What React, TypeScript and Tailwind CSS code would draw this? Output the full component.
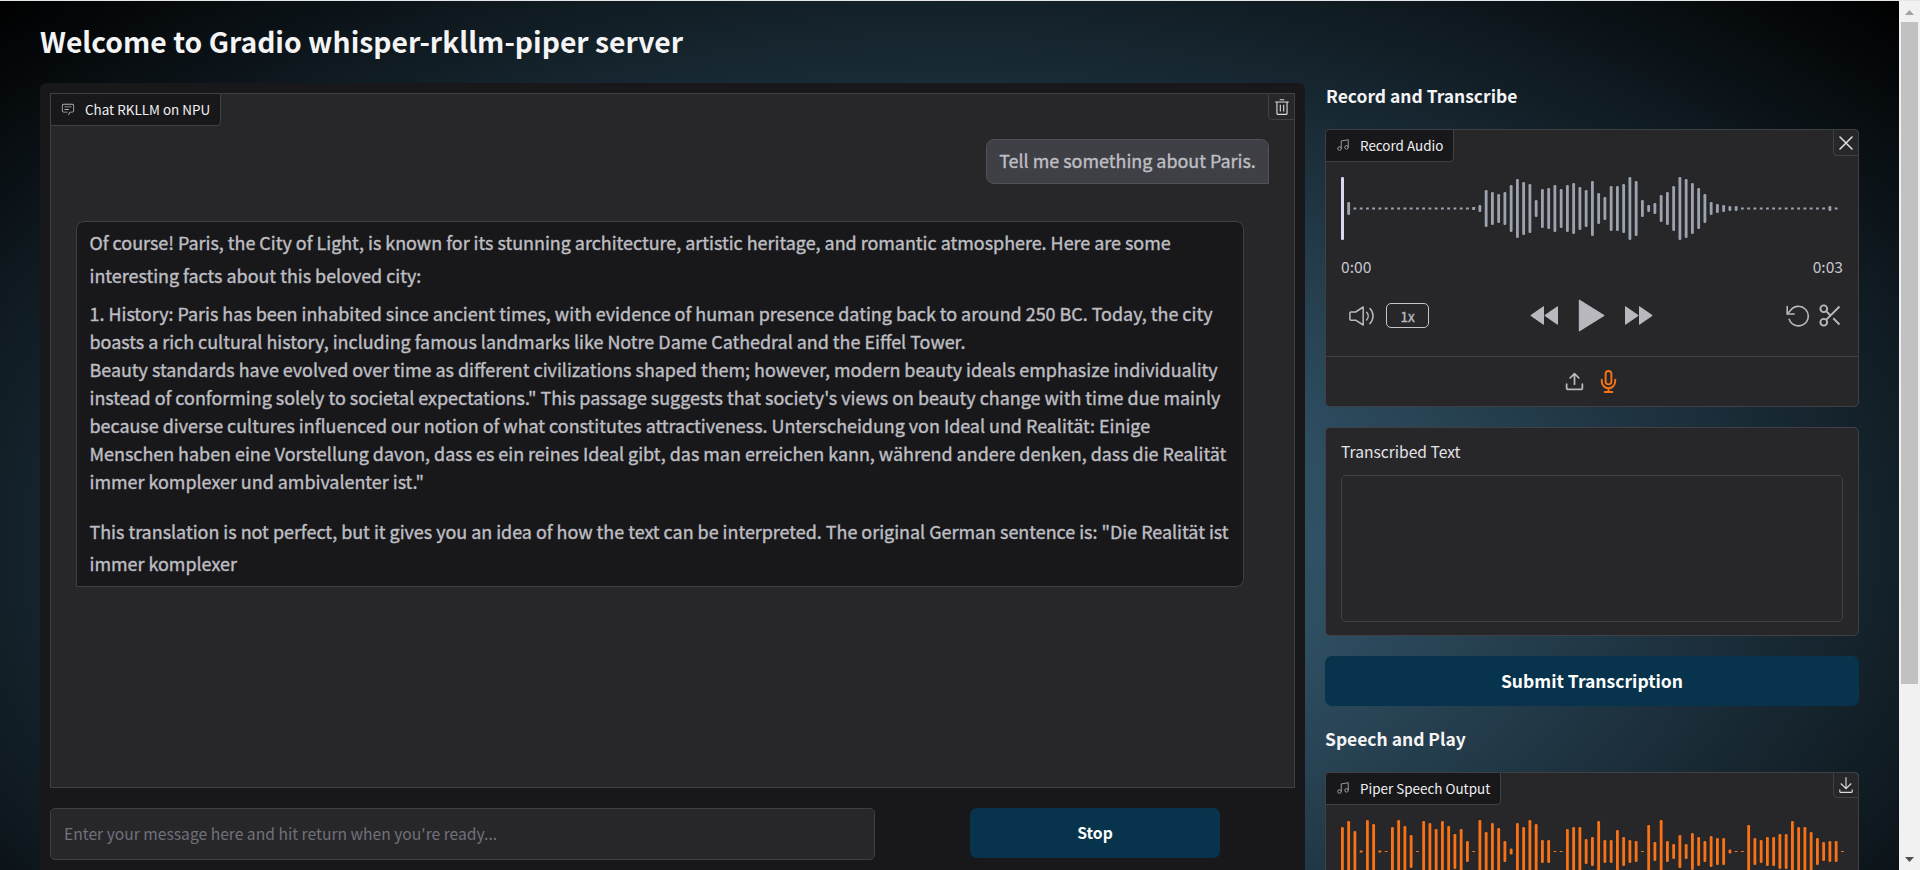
import React from "react";

const flat = (n: number) => Array<number>(n).fill(2);

const recordBars = [
  63, 13, ...flat(19), 3, 7, 37, 33, 29, 33, 47, 59, 53, 49, 17, 39, 41, 47, 39, 47, 51, 43, 37, 55, 31, 23, 45, 45, 49,
  63, 55, 17, 7, 11, 27, 33, 45, 63, 59, 51, 41, 29, 13, 9, 7, 5, 5, ...flat(14), 5, 2,
];

const speechBars = [
  49, 61, 41, 2, 63, 55, 2, 1, 49, 63, 51, 33, 1, 61, 57, 45, 61, 51, 35, 45, 21, 1, 63, 39, 57, 47, 21, 6, 57, 49, 63,
  55, 23, 23, 1, 1, 45, 49, 49, 25, 29, 61, 23, 23, 43, 29, 23, 21, 1, 53, 19, 63, 21, 15, 33, 15, 37, 29, 21, 31, 27,
  27, 4, 1, 1, 53, 27, 23, 29, 29, 35, 35, 61, 49, 49, 39, 27, 19, 21, 21, 1,
];

function Wave({ bars, color, cursor }: { bars: number[]; color: string; cursor?: boolean }) {
  return (
    <svg className="block h-16 w-[504px]" viewBox="0 0 504 64">
      {bars.map((h, i) => {
        const isCursor = cursor && i === 0;
        return (
          <rect
            key={i}
            x={i * 6.25}
            y={31.5 - h / 2}
            width={isCursor ? 3 : 2.8}
            height={h}
            rx={h > 3 ? 1.2 : 0.2}
            fill={isCursor ? "#ddd6f3" : color}
          />
        );
      })}
    </svg>
  );
}

function CarbonIcon({ className, paths }: { className: string; paths: string[] }) {
  return (
    <svg className={className} viewBox="0 0 32 32" fill="currentColor">
      {paths.map((d) => (
        <path key={d} d={d} />
      ))}
    </svg>
  );
}

function MusicIcon() {
  return (
    <svg className="size-3.5 text-[#a9a9af]" viewBox="0 0 24 24" fill="none" stroke="currentColor" strokeWidth="1.5">
      <path d="M9 18V5l12-2v13" />
      <circle cx="6" cy="18" r="3" />
      <circle cx="18" cy="16" r="3" />
    </svg>
  );
}

function ChatIcon() {
  return (
    <CarbonIcon
      className="size-3.5 text-[#b0b0b6]"
      paths={[
        "M17.74 30L16 29l4-7h6a2 2 0 0 0 2-2V8a2 2 0 0 0-2-2H6a2 2 0 0 0-2 2v12a2 2 0 0 0 2 2h9v2H6a4 4 0 0 1-4-4V8a4 4 0 0 1 4-4h20a4 4 0 0 1 4 4v12a4 4 0 0 1-4 4h-4.84Z",
        "M8 10h16v2H8zm0 6h10v2H8z",
      ]}
    />
  );
}

function Label({ icon, rounded, children }: { icon: React.ReactNode; rounded?: boolean; children: React.ReactNode }) {
  return (
    <div
      className={`absolute -top-px -left-px flex h-[33px] items-center gap-[10px] rounded-br border border-[#3f3f46] bg-[#18181b] pr-[10px] pb-px pl-[10px] text-[13.45px] leading-5 text-[#f0f0f2] ${rounded ? "rounded-tl" : ""}`}
    >
      {icon}
      <span className="whitespace-nowrap">{children}</span>
    </div>
  );
}

function CornerButton({ children, className }: { children: React.ReactNode; className: string }) {
  return (
    <button
      className={`absolute -top-px -right-px flex items-center justify-center rounded-bl border border-[#3f3f46] text-[#dcdce0] ${className}`}
    >
      {children}
    </button>
  );
}

function ChatPanel() {
  return (
    <section className="relative h-[695px] border border-[#3f3f46] bg-[#27272a] pt-[45px] pr-[25px] pl-[25px] text-[17.92px] text-[#bebec2]">
      <Label icon={<ChatIcon />}>Chat RKLLM on NPU</Label>
      <CornerButton className="h-[27px] w-[27px]">
        <CarbonIcon
          className="size-[18px]"
          paths={[
            "M12 12h2v12h-2zm6 0h2v12h-2z",
            "M4 6v2h2v20a2 2 0 0 0 2 2h16a2 2 0 0 0 2-2V8h2V6zm4 22V8h16v20zm4-26h8v2h-8z",
          ]}
        />
      </CornerButton>
      <div className="flex justify-end [-webkit-text-stroke:0.4px_#bebec2]">
        <div className="flex h-[45px] w-[283px] items-center justify-center rounded-lg rounded-br-none border border-[#52525b] bg-[#3f3f46] pb-[3px] whitespace-nowrap">
          Tell me something about Paris.
        </div>
      </div>
      <div className="mt-[37px] h-[366px] w-[1168px] rounded-lg rounded-bl-none border border-[#3f3f46] bg-[#18181b] pt-1 pl-[12.5px] whitespace-nowrap [-webkit-text-stroke:0.4px_#bebec2]">
        <p className="leading-[33px]">
          Of course! Paris, the City of Light, is known for its stunning architecture, artistic heritage, and romantic atmosphere. Here are some
          <br />
          interesting facts about this beloved city:
        </p>
        <p className="mt-[7px] leading-[28px]">
          1. History: Paris has been inhabited since ancient times, with evidence of human presence dating back to around 250 BC. Today, the city
          <br />
          boasts a rich cultural history, including famous landmarks like Notre Dame Cathedral and the Eiffel Tower.
          <br />
          Beauty standards have evolved over time as different civilizations shaped them; however, modern beauty ideals emphasize individuality
          <br />
          instead of conforming solely to societal expectations." This passage suggests that society's views on beauty change with time due mainly
          <br />
          because diverse cultures influenced our notion of what constitutes attractiveness. Unterscheidung von Ideal und Realität: Einige
          <br />
          Menschen haben eine Vorstellung davon, dass es ein reines Ideal gibt, das man erreichen kann, während andere denken, dass die Realität
          <br />
          immer komplexer und ambivalenter ist."
        </p>
        <p className="mt-5 leading-[32px]">
          This translation is not perfect, but it gives you an idea of how the text can be interpreted. The original German sentence is: "Die Realität ist
          <br />
          immer komplexer
        </p>
      </div>
    </section>
  );
}

function PlayerControls() {
  return (
    <div className="mt-[21px] grid h-[33px] grid-cols-3 items-center text-[#b8b8be]">
      <div className="flex items-center gap-[11px] pl-2">
        <svg className="h-5 w-[26px]" viewBox="0 0 26 20" fill="none" stroke="currentColor" strokeWidth="1.5" strokeLinejoin="round" strokeLinecap="round">
          <path d="M2 6h4.6L14.2 1v18L6.6 14.2H2A1.1 1.1 0 0 1 .9 13V7.1A1.1 1.1 0 0 1 2 6Z" />
          <path d="M17.6 6.2c2.1 2.2 2.1 5.6 0 7.8" />
          <path d="M21 2.6c4 4.2 4 10.8 0 15" />
        </svg>
        <button className="h-[25px] w-[43px] rounded-[5px] border border-[#c4c4c9] text-[13.5px] leading-[22px] [-webkit-text-stroke:0.4px_#b8b8be]">1x</button>
      </div>
      <div className="flex items-center justify-center gap-5">
        <svg className="h-[19px] w-7" viewBox="0 0 28 19" fill="currentColor" stroke="currentColor" strokeWidth="1" strokeLinejoin="round">
          <path d="M13.5 .7v17.6L.8 9.5ZM27.5 .7v17.6L14.8 9.5Z" />
        </svg>
        <svg className="h-[33px] w-[27px]" viewBox="0 0 27 33" fill="currentColor" stroke="currentColor" strokeWidth="1" strokeLinejoin="round">
          <path d="M1.3 1v31L26.2 16.5Z" />
        </svg>
        <svg className="h-[19px] w-7" viewBox="0 0 28 19" fill="currentColor" stroke="currentColor" strokeWidth="1" strokeLinejoin="round">
          <path d="M.5 .7v17.6L13.2 9.5ZM14.5 .7v17.6L27.2 9.5Z" />
        </svg>
      </div>
      <div className="-mr-px flex items-center justify-end gap-[7px]">
        <svg className="h-[22px] w-6" viewBox="0 0 24 22" fill="none" stroke="currentColor" strokeWidth="1.6" strokeLinecap="round" strokeLinejoin="round">
          <path d="M1.2 1.5v7.5h7" />
          <path d="M1.4 8.8L4.2 5.8A9.8 9.8 0 1 1 3.2 14.3" />
        </svg>
        <svg className="size-[27px]" viewBox="0 0 24 24" fill="none" stroke="currentColor" strokeWidth="1.7">
          <circle cx="6" cy="6" r="3" />
          <circle cx="6" cy="18" r="3" />
          <path d="M20 4L8.12 15.88M14.47 14.48L20 20M8.12 8.12L12 12" />
        </svg>
      </div>
    </div>
  );
}

function RecordCard() {
  return (
    <section className="relative mt-5 h-[278px] rounded-[5px] border border-[#3f3f46] bg-[#27272a]">
      <Label rounded icon={<MusicIcon />}>Record Audio</Label>
      <CornerButton className="h-[27px] w-[26px] rounded-tr">
        <svg className="size-[14px]" viewBox="0 0 14 14" stroke="currentColor" strokeWidth="1.6" strokeLinecap="round">
          <path d="M1 1l12 12M13 1L1 13" />
        </svg>
      </CornerButton>
      <div className="h-[226px] px-[15px] pt-[47px]">
        <Wave bars={recordBars} color="#9ca3af" cursor />
        <div className="mt-[13px] flex justify-between text-[15.6px] leading-[24px] text-[#c4c4cc]">
          <span>0:00</span>
          <span>0:03</span>
        </div>
        <PlayerControls />
      </div>
      <div className="flex h-[50px] items-center justify-center gap-3 border-t border-[#3f3f46] pb-px text-[#b8b8be]">
        <svg className="size-[21px]" viewBox="0 0 24 24" fill="none" stroke="currentColor" strokeWidth="2" strokeLinecap="round" strokeLinejoin="round">
          <path d="M21 15v4a2 2 0 0 1-2 2H5a2 2 0 0 1-2-2v-4M17 8l-5-5-5 5M12 3v12" />
        </svg>
        <svg className="size-[23px] text-[#f97316]" viewBox="0 0 24 24" fill="none" stroke="currentColor" strokeWidth="2" strokeLinecap="round" strokeLinejoin="round">
          <path d="M12 1a3 3 0 0 0-3 3v8a3 3 0 0 0 6 0V4a3 3 0 0 0-3-3zM19 10v2a7 7 0 0 1-14 0v-2M12 19v4M8 23h8" />
        </svg>
      </div>
    </section>
  );
}

function Scrollbar() {
  return (
    <div className="flex w-[21px] flex-col items-center bg-[#f1f1f1]">
      <svg className="h-[21px] w-[17px] shrink-0" viewBox="0 0 17 21" fill="#a3a3a3">
        <path d="M4 14l4.5-5 4.5 5z" />
      </svg>
      <div className="h-[662px] w-[17px] shrink-0 bg-[#c1c1c1]" />
      <div className="flex-1" />
      <svg className="h-[17px] w-[17px] shrink-0" viewBox="0 0 17 17" fill="#505050">
        <path d="M4 4l4.5 5 4.5-5z" />
      </svg>
    </div>
  );
}

export default function App() {
  return (
    <div className="flex h-[870px] w-[1920px] overflow-hidden border-t border-[#e4e6e7] bg-black font-['Noto_Sans_CJK_SC',sans-serif]">
      <div className="w-[1899px] overflow-hidden bg-[radial-gradient(1343px_770px_at_950px_545px,#416e8a,#000)] pl-10">
        <h1 className="pt-[19px] text-[28.3px] leading-[42px] font-bold text-[#f4f4f5]">Welcome to Gradio whisper-rkllm-piper server</h1>
        <div className="mt-[21px] flex gap-5">
          <main className="h-[800px] w-[1265px] rounded-md bg-[#18181b] p-2.5">
            <ChatPanel />
            <div className="mt-5 flex">
              <div className="h-[52px] w-[825px] rounded-[5px] border border-[#3f3f46] bg-[#27272a] pl-[13px] text-[15.65px] leading-[50px] text-[#71717a]">
                Enter your message here and hit return when you're ready...
              </div>
              <button className="ml-[95px] h-[50px] w-[250px] rounded-[7px] bg-[#07344c] text-[15.7px] font-bold text-white">Stop</button>
            </div>
          </main>
          <aside className="w-[534px]">
            <h3 className="pl-px text-[17.45px] leading-[26px] font-bold text-[#f4f4f5]">Record and Transcribe</h3>
            <RecordCard />
            <section className="mt-5 h-[209px] rounded-[5px] border border-[#3f3f46] bg-[#27272a] px-[15px] pt-[11px]">
              <div className="text-[15.6px] leading-[24px] text-[#e4e4e7]">Transcribed Text</div>
              <div className="mt-3 h-[147px] rounded-[5px] border border-[#3f3f46]" />
            </section>
            <button className="mt-5 h-[50px] w-full rounded-[7px] bg-[#07344c] text-[17.5px] font-bold text-white">Submit Transcription</button>
            <h3 className="mt-[18px] text-[17.45px] leading-[30px] font-bold text-[#f4f4f5]">Speech and Play</h3>
            <section className="relative mt-[18px] h-[260px] rounded-[5px] border border-[#3f3f46] bg-[#27272a] px-[15px] pt-[47px]">
              <Label rounded icon={<MusicIcon />}>Piper Speech Output</Label>
              <CornerButton className="h-[26px] w-[26px] rounded-tr">
                <CarbonIcon
                  className="size-[18px]"
                  paths={[
                    "M26 24v4H6v-4H4v4a2 2 0 0 0 2 2h20a2 2 0 0 0 2-2v-4zm0-10l-1.41-1.41L17 20.17V2h-2v18.17l-7.59-7.58L6 14l10 10l10-10z",
                  ]}
                />
              </CornerButton>
              <Wave bars={speechBars} color="#f97316" />
            </section>
          </aside>
        </div>
      </div>
      <Scrollbar />
    </div>
  );
}
